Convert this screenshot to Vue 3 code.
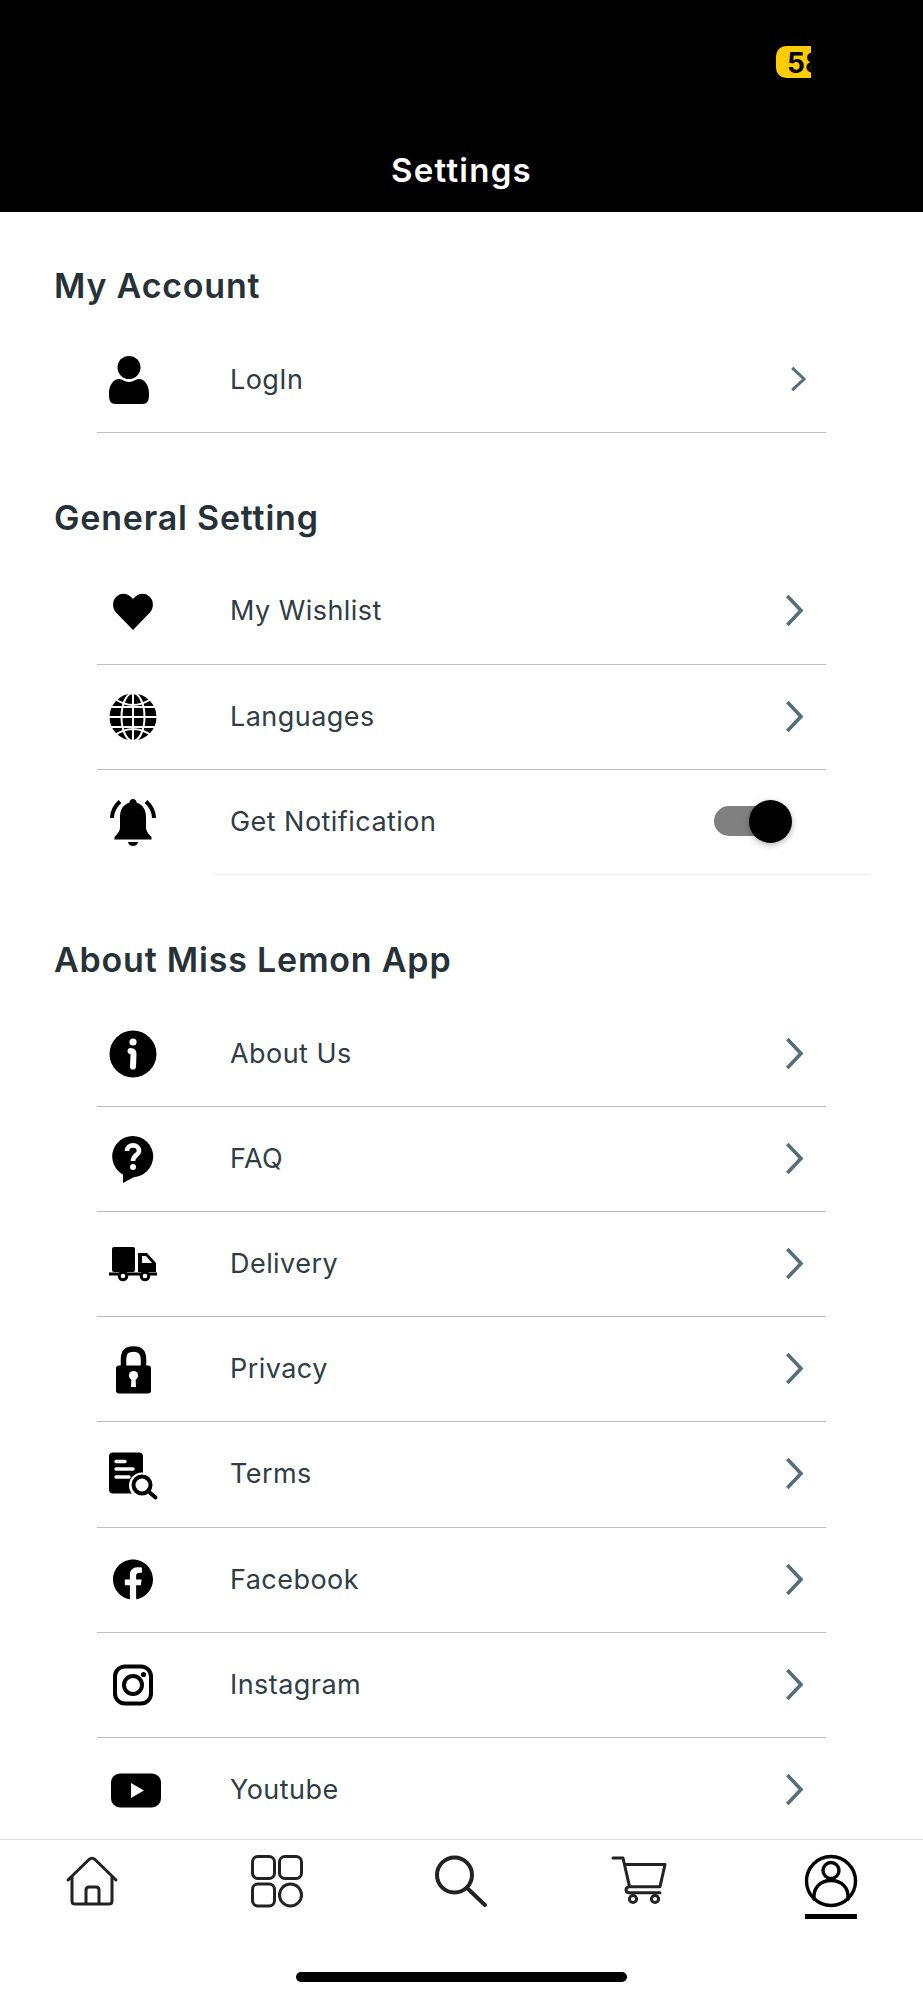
<script setup>
const I = {
  person: '<circle cx="20" cy="12.5" r="11.5"/><path d="M10 24C14 24 15 27 20 27C25 27 26 24 30 24C36 24 40 31 40 38C40 44 40 49 33 49H7C0 49 0 44 0 38C0 31 4 24 10 24Z"/>',
  heart: '<path d="M24 43L7.5 26C3 21.5 3 14 7 10C11.5 5 19 5.5 24 12C29 5.5 36.5 5 41 10C45 14 45 21.5 40.5 26Z"/>',
  globe: '<circle cx="24" cy="25" r="23.5"/><g fill="none" stroke="#fff" stroke-width="2"><ellipse cx="24" cy="25" rx="11.5" ry="24"/><path d="M24 0V50M0 25H48M0 15H48M0 35H48M6 7Q24 19 42 7M6 43Q24 31 42 43"/></g>',
  bell: '<path d="M24 2C26 2 27.5 3.5 27.5 5.5C34 7.5 37 13 37 20L37 30C37 35 40 37 42.5 40V42.5H5.5V40C8 37 11 35 11 30L11 20C11 13 14 7.5 20.5 5.5C20.5 3.5 22 2 24 2Z"/><path d="M19 45H29C28.5 48 26 49 24 49C22 49 19.5 48 19 45Z"/><path d="M3 21C3 14 6 9 11 4.5M45 21C45 14 42 9 37 4.5" fill="none" stroke="#000" stroke-width="4"/>',
  info: '<circle cx="24" cy="25" r="23.5"/><circle cx="24" cy="13" r="3.6" fill="#fff"/><path d="M21.5 22Q24.5 22 24.5 25L24 37.5" fill="none" stroke="#fff" stroke-width="6" stroke-linecap="round"/>',
  faq: '<circle cx="23.7" cy="22.5" r="20.5"/><path d="M14 49V36L27 42Z"/><path d="M18 17C18 9.5 30 9.5 30 17C30 21 24 21 24 27" fill="none" stroke="#fff" stroke-width="4.6"/><circle cx="24" cy="33" r="3" fill="#fff"/>',
  truck: '<rect x="3" y="8" width="23" height="25" rx="2"/><path fill-rule="evenodd" d="M29 14H38L47 24V33H29ZM33 17V24H43L37 17Z"/><path d="M0 35H48" stroke="#000" stroke-width="3"/><circle cx="14" cy="37" r="3.8" fill="#fff" stroke="#000" stroke-width="3"/><circle cx="36" cy="37" r="3.8" fill="#fff" stroke="#000" stroke-width="3"/>',
  lock: '<path d="M14.5 22V14C14.5 7 18 4 24.5 4C31 4 34.5 7 34.5 14V22" fill="none" stroke="#000" stroke-width="5.5"/><rect x="7" y="20.5" width="35" height="28" rx="3"/><circle cx="24.5" cy="30.5" r="4.6" fill="#fff"/><path d="M22.5 32H26.5L27 42H22Z" fill="#fff"/>',
  terms: '<rect x="0" y="2.5" width="34" height="41" rx="4"/><path d="M7 11.5H16M7 19H24M7 27H20" stroke="#fff" stroke-width="3.4" stroke-linecap="round"/><circle cx="33" cy="35.5" r="13" fill="#fff"/><circle cx="33" cy="35" r="8.5" fill="#fff" stroke="#000" stroke-width="4"/><path d="M39 41L46.5 47.5" stroke="#000" stroke-width="4" stroke-linecap="round"/>',
  fb: '<path transform="translate(4 4.4) scale(1.667)" d="M24 12.073c0-6.627-5.373-12-12-12s-12 5.373-12 12c0 5.99 4.388 10.954 10.125 11.854v-8.385H7.078v-3.47h3.047V9.43c0-3.007 1.792-4.669 4.533-4.669 1.312 0 2.686.235 2.686.235v2.953H15.83c-1.491 0-1.956.925-1.956 1.874v2.25h3.328l-.532 3.47h-2.796v8.385C19.612 23.027 24 18.062 24 12.073z"/>',
  ig: '<rect x="6" y="6.5" width="36" height="37" rx="10" fill="none" stroke="#000" stroke-width="4"/><circle cx="24" cy="25" r="9" fill="none" stroke="#000" stroke-width="4"/><circle cx="34.5" cy="14.5" r="2.6"/>',
  yt: '<rect x="2" y="8.5" width="50" height="34" rx="9"/><path d="M22 18L35 25.5L22 33Z" fill="#fff"/>'
}

const sections = [
  { title: 'My Account', rows: [{ label: 'LogIn', icon: I.person, small: true }] },
  { title: 'General Setting', rows: [
    { label: 'My Wishlist', icon: I.heart },
    { label: 'Languages', icon: I.globe },
    { label: 'Get Notification', icon: I.bell, toggle: true }
  ] },
  { title: 'About Miss Lemon App', rows: [
    { label: 'About Us', icon: I.info },
    { label: 'FAQ', icon: I.faq },
    { label: 'Delivery', icon: I.truck },
    { label: 'Privacy', icon: I.lock },
    { label: 'Terms', icon: I.terms },
    { label: 'Facebook', icon: I.fb },
    { label: 'Instagram', icon: I.ig },
    { label: 'Youtube', icon: I.yt, last: true }
  ] }
]

const tabs = [
  { name: 'home', svg: '<path d="M2 25L23 4.5Q26 2 29 4.5L50 25M6 22V46Q6 49 9 49H43Q46 49 46 46V22M20 49V35Q20 32 23 32H30Q33 32 33 35V49"/>' },
  { name: 'apps', svg: '<rect x="1.5" y="1.5" width="22" height="22" rx="5.5"/><rect x="28.5" y="1.5" width="22" height="22" rx="5.5"/><rect x="1.5" y="29" width="22" height="22" rx="5.5"/><circle cx="39.5" cy="40" r="11"/>' },
  { name: 'search', svg: '<circle cx="19.5" cy="20" r="17.5" stroke-width="4"/><path d="M32 33L50 50" stroke-width="4"/>' },
  { name: 'cart', svg: '<path d="M-7 3H3L9.5 31.7H40L45 9.5H5M9.5 31.7Q6 32 6 35Q6 37.7 9.5 37.7H40"/><circle cx="13" cy="44" r="3.6"/><circle cx="35" cy="44" r="3.6"/>' },
  { name: 'profile', active: true, svg: '<circle cx="26" cy="26" r="24.5"/><circle cx="26" cy="15.5" r="8"/><path d="M9 44C8 33 15 25.5 26 25.5C37 25.5 44 33 43 44"/>' }
]
</script>

<template>
  <div class="app">
    <header class="header">
      <div class="header-top">
        <div class="badge">58</div>
      </div>
      <h1 class="title">Settings</h1>
    </header>

    <main class="content">
      <section v-for="s in sections" :key="s.title" class="section">
        <h2 class="section-title">{{ s.title }}</h2>
        <div class="list">
          <template v-for="r in s.rows" :key="r.label">
            <div class="row" :class="{ plain: r.toggle || r.last }">
              <svg class="icon" viewBox="0 0 48 48" width="48" height="48" v-html="r.icon"></svg>
              <span class="label">{{ r.label }}</span>
              <div v-if="r.toggle" class="toggle"><span class="knob"></span></div>
              <svg v-else-if="r.small" class="chev small" viewBox="0 0 15 24" width="15" height="24">
                <path d="M1.2 .8L13 12L1.2 23.2" />
              </svg>
              <svg v-else class="chev" viewBox="0 0 17 31" width="17" height="31">
                <path d="M1.3 1L15 15.5L1.3 30" />
              </svg>
            </div>
            <div v-if="r.toggle" class="thin-sep"></div>
          </template>
        </div>
      </section>
    </main>

    <nav class="tabbar">
      <div class="tabs">
        <div v-for="t in tabs" :key="t.name" class="tab">
          <svg class="tab-icon" :class="{ active: t.active }" viewBox="0 0 52 52" width="52" height="52" v-html="t.svg"></svg>
          <span v-if="t.active" class="underline"></span>
        </div>
      </div>
      <div class="home-bar"></div>
    </nav>
  </div>
</template>

<style>
html, body { margin: 0; background: #fff; }
</style>

<style scoped>
.app {
  width: 923px;
  height: 2000px;
  display: flex;
  flex-direction: column;
  overflow: hidden;
  background: #fff;
  font-family: Inter, "Liberation Sans", sans-serif;
}
.header {
  height: 212px;
  background: #000;
  flex: none;
  display: flex;
  flex-direction: column;
}
.header-top {
  height: 131px;
  padding-top: 46px;
  box-sizing: border-box;
  padding-left: 776px;
}
.badge {
  width: 35px;
  height: 32px;
  box-sizing: border-box;
  padding-left: 11px;
  background: #ffcc00;
  border-radius: 10px 0 0 10px;
  overflow: hidden;
  color: #000;
  font-weight: 700;
  font-size: 28px;
  line-height: 34px;
  white-space: nowrap;
}
.title {
  margin: 0;
  text-align: center;
  color: #fff;
  font-size: 33px;
  font-weight: 600;
  letter-spacing: 1.25px;
  line-height: 78px;
  height: 78px;
}
.content {
  flex: 1;
  min-height: 0;
  overflow: hidden;
  padding-top: 49.8px;
}
.section { margin-bottom: 60.6px; }
.section-title {
  margin: 0 0 16px 54px;
  height: 50px;
  line-height: 48px;
  font-size: 34px;
  font-weight: 600;
  letter-spacing: .8px;
  color: #263238;
}
.list { display: flex; flex-direction: column; }
.row {
  margin: 0 97px;
  height: 105.2px;
  box-sizing: border-box;
  padding-bottom: 1.5px;
  display: grid;
  grid-template-columns: 133px 1fr auto;
  align-items: center;
  border-bottom: 1.5px solid #bdbdbd;
}
.row.plain { border-bottom: 0; padding-bottom: 3px; }
.icon { margin-left: 12px; overflow: visible; display: block; fill: #000; }
.label { font-size: 27px; color: #2f3d45; font-weight: 400; letter-spacing: .45px; }
.chev { margin-right: 23px; display: block; }
.chev.small { margin-right: 20px; }
.chev path { fill: none; stroke: #546e7a; stroke-width: 3.6; }
.chev.small path { stroke-width: 3; }
.toggle {
  position: relative;
  width: 76px;
  height: 30px;
  margin-right: 36px;
  border-radius: 15px;
  background: #808080;
}
.knob {
  position: absolute;
  right: -1.5px;
  top: -6.5px;
  width: 43px;
  height: 43px;
  border-radius: 50%;
  background: #000;
  box-shadow: 0 2px 6px rgba(0, 0, 0, .3);
}
.thin-sep {
  margin: -1px 54px 0 214px;
  height: 1px;
  background: #ececec;
}
.tabbar {
  flex: none;
  height: 161px;
  box-sizing: border-box;
  background: #fff;
  border-top: 1.5px solid #e3e3e3;
  padding-top: 15px;
}
.tabs { display: flex; height: 64px; align-items: flex-start; }
.tab { flex: 1; display: flex; flex-direction: column; align-items: center; }
.tab-icon {
  display: block;
  overflow: visible;
  fill: none;
  stroke: #222;
  stroke-width: 3;
  stroke-linecap: round;
  stroke-linejoin: round;
}
.tab-icon.active { stroke: #000; stroke-width: 3.4; }
.underline { margin-top: 7px; width: 52px; height: 5px; background: #000; }
.home-bar {
  width: 331px;
  height: 10px;
  margin: 53px auto 0;
  border-radius: 5px;
  background: #000;
}
</style>
